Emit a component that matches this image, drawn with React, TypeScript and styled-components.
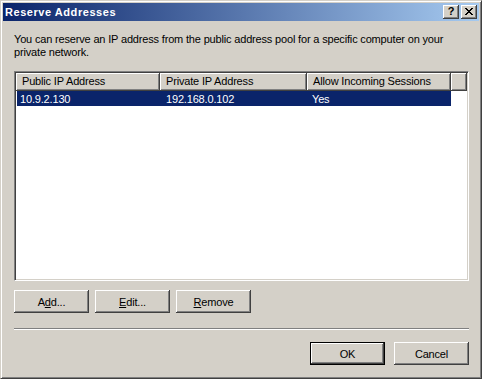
import React from "react";
import styled, { createGlobalStyle } from "styled-components";

const face = "#d4d0c8";
const shadow = "#808080";
const darkShadow = "#404040";
const navy = "#0a246a";

const GlobalStyle = createGlobalStyle`
  html, body {
    margin: 0;
    padding: 0;
    background: ${face};
  }
  body {
    font-family: "Liberation Sans", Arial, sans-serif;
    font-size: 11px;
    letter-spacing: -0.17px;
    color: #000;
  }
`;

const Window = styled.div`
  width: 482px;
  height: 379px;
  box-sizing: border-box;
  background: ${face};
  border: 1px solid;
  border-color: ${face} ${darkShadow} ${darkShadow} ${face};
  box-shadow: inset 1px 1px #fff, inset -1px -1px ${shadow};
  padding: 2px;
  display: flex;
  flex-direction: column;
`;

const TitleBar = styled.div`
  height: 18px;
  flex: none;
  display: flex;
  align-items: center;
  padding: 0 2px;
  background: linear-gradient(to right, ${navy}, #a6caf0);
`;

const Title = styled.div`
  flex: 1;
  color: #fff;
  font-weight: bold;
  font-size: 11px;
  letter-spacing: 0.55px;
`;

const TitleButtons = styled.div`
  display: flex;
  gap: 2px;
`;

const TitleButton = styled.div`
  width: 16px;
  height: 14px;
  box-sizing: border-box;
  background: ${face};
  box-shadow: inset -1px -1px ${darkShadow}, inset 1px 1px #fff,
    inset -2px -2px ${shadow};
  display: flex;
  align-items: center;
  justify-content: center;
  font-weight: bold;
  font-size: 11px;
  line-height: 1;
  padding-bottom: 1px;
`;

const Body = styled.div`
  flex: 1;
  padding: 12px 10px 0 11px;
  display: flex;
  flex-direction: column;
`;

const Description = styled.p`
  margin: 0;
  line-height: 13px;
`;

const ListView = styled.div`
  margin-top: 12px;
  height: 210px;
  box-sizing: border-box;
  background: #fff;
  border: 1px solid;
  border-color: ${shadow} #fff #fff ${shadow};
  box-shadow: inset 1px 1px ${darkShadow}, inset -1px -1px ${face};
  padding: 1px;
`;

const HeaderRow = styled.div`
  display: flex;
  height: 18px;
`;

const HeaderCell = styled.div<{ $w?: number }>`
  ${(p) => (p.$w ? `width: ${p.$w}px;` : "flex: 1;")}
  box-sizing: border-box;
  background: ${face};
  box-shadow: inset -1px -1px ${darkShadow}, inset 1px 1px #fff,
    inset -2px -2px ${shadow};
  padding: 2px 0 0 6px;
  white-space: nowrap;
  overflow: hidden;
`;

const Row = styled.div<{ $selected?: boolean }>`
  display: flex;
  width: 434px;
  height: 15px;
  margin-left: 1px;
  align-items: center;
  background: ${(p) => (p.$selected ? navy : "transparent")};
  color: ${(p) => (p.$selected ? "#fff" : "#000")};
`;

const Cell = styled.div<{ $w: number; $pad: number }>`
  width: ${(p) => p.$w}px;
  padding-left: ${(p) => p.$pad}px;
  box-sizing: border-box;
  white-space: nowrap;
`;

const ButtonRow = styled.div<{ $end?: boolean }>`
  display: flex;
  gap: ${(p) => (p.$end ? 9 : 6)}px;
  justify-content: ${(p) => (p.$end ? "flex-end" : "flex-start")};
`;

const Button = styled.button<{ $default?: boolean }>`
  width: 75px;
  height: 23px;
  padding: 0;
  box-sizing: border-box;
  font-family: inherit;
  font-size: 11px;
  letter-spacing: inherit;
  color: #000;
  background: ${face};
  border: ${(p) => (p.$default ? "1px solid #000" : "none")};
  box-shadow: inset -1px -1px ${darkShadow}, inset 1px 1px #fff,
    inset -2px -2px ${shadow};
  cursor: default;
`;

const Separator = styled.div`
  height: 0;
  border-top: 1px solid ${shadow};
  border-bottom: 1px solid #fff;
`;

const Spacer = styled.div<{ $h: number }>`
  height: ${(p) => p.$h}px;
  flex: none;
`;

const CloseIcon = () => (
  <svg width="8" height="7" viewBox="0 0 8 7" shapeRendering="crispEdges">
    <path
      d="M0 0h2v1h-2zM6 0h2v1h-2zM1 1h2v1h-2zM5 1h2v1h-2zM2 2h4v1h-4zM3 3h2v1h-2zM2 4h4v1h-4zM1 5h2v1h-2zM5 5h2v1h-2zM0 6h2v1h-2zM6 6h2v1h-2z"
      fill="#000"
    />
  </svg>
);

export default function App() {
  return (
    <>
      <GlobalStyle />
      <Window>
        <TitleBar>
          <Title>Reserve Addresses</Title>
          <TitleButtons>
            <TitleButton>?</TitleButton>
            <TitleButton>
              <CloseIcon />
            </TitleButton>
          </TitleButtons>
        </TitleBar>
        <Body>
          <Description>
            You can reserve an IP address from the public address pool for a
            specific computer on your
            <br />
            private network.
          </Description>
          <ListView>
            <HeaderRow>
              <HeaderCell $w={144}>Public IP Address</HeaderCell>
              <HeaderCell $w={147}>Private IP Address</HeaderCell>
              <HeaderCell $w={144}>Allow Incoming Sessions</HeaderCell>
              <HeaderCell />
            </HeaderRow>
            <Row $selected>
              <Cell $w={143} $pad={3}>10.9.2.130</Cell>
              <Cell $w={147} $pad={6}>192.168.0.102</Cell>
              <Cell $w={144} $pad={5}>Yes</Cell>
            </Row>
          </ListView>
          <Spacer $h={9} />
          <ButtonRow>
            <Button>
              A<u>d</u>d...
            </Button>
            <Button>
              <u>E</u>dit...
            </Button>
            <Button>
              <u>R</u>emove
            </Button>
          </ButtonRow>
          <Spacer $h={15} />
          <Separator />
          <Spacer $h={12} />
          <ButtonRow $end>
            <Button $default>OK</Button>
            <Button>Cancel</Button>
          </ButtonRow>
        </Body>
      </Window>
    </>
  );
}
